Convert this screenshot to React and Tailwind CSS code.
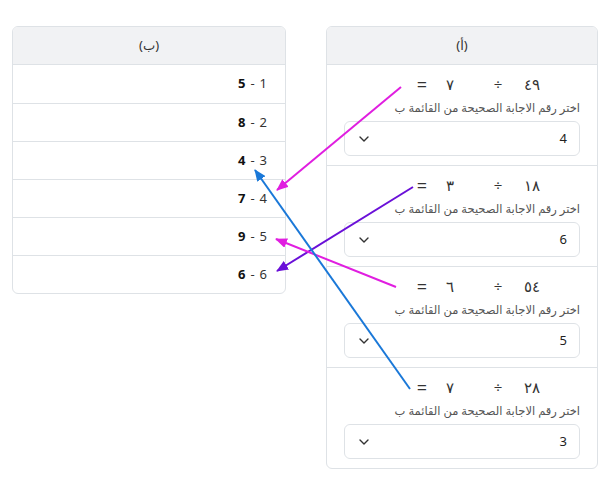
import React from 'react';

const answers = [
  { n: 1, v: 5 },
  { n: 2, v: 8 },
  { n: 3, v: 4 },
  { n: 4, v: 7 },
  { n: 5, v: 9 },
  { n: 6, v: 6 },
];

const questions = [
  { a: '٤٩', b: '٧', pick: 4 },
  { a: '١٨', b: '٣', pick: 6 },
  { a: '٥٤', b: '٦', pick: 5 },
  { a: '٢٨', b: '٧', pick: 3 },
];

// connecting lines drawn over both cards
const links = [
  { x1: 401, y1: 87, x2: 277, y2: 190, color: '#e01ee0', id: 'm1' },
  { x1: 413, y1: 187, x2: 277, y2: 271, color: '#6a10d8', id: 'p1' },
  { x1: 396, y1: 287, x2: 276, y2: 239, color: '#e01ee0', id: 'm2' },
  { x1: 410, y1: 389, x2: 255, y2: 170, color: '#1a78d8', id: 'b1' },
];

function Chevron() {
  return (
    <svg width="10" height="6" viewBox="0 0 10 6" fill="none">
      <path d="M1 1l4 4 4-4" stroke="#333" strokeWidth="1.4" strokeLinecap="round" strokeLinejoin="round" />
    </svg>
  );
}

function QuestionItem({ q, first }) {
  return (
    <div className={`px-[17px] pt-[9px] pb-[9px] ${first ? '' : 'border-t border-[#dee2e6]'}`}>
      <div dir="rtl" className="flex items-center h-[20px] text-[15px] text-[#333] pr-[30px]">
        <span className="w-[36px] text-center">{q.a}</span>
        <span className="w-[32px] text-center">÷</span>
        <span className="w-[24px] ml-[4px] mr-[20px] text-center">{q.b}</span>
        <span className="w-[24px] text-center text-[18px] leading-none">=</span>
      </div>
      <div dir="rtl" className="mt-[4px] h-[20px] leading-[20px] text-[11.5px] text-[#555]">
        اختر رقم الاجابة الصحيحة من القائمة ب
      </div>
      <div className="mt-[3px] h-[35px] flex items-center justify-between border border-[#dee2e6] rounded-[6px] bg-white pl-[14px] pr-[12px]">
        <Chevron />
        <span className="text-[13px] text-[#222]">{q.pick}</span>
      </div>
    </div>
  );
}

export default function App() {
  return (
    <div
      className="relative w-[614px] h-[489px] bg-white"
      style={{ fontFamily: '"Noto Sans", "DejaVu Sans", sans-serif' }}
    >
      <div className="flex items-start pt-[26px] pl-[12px] gap-[40px]">
        {/* List B */}
        <div className="w-[274px] border border-[#dee2e6] rounded-[6px] overflow-hidden">
          <div className="h-[38px] flex items-center justify-center bg-[#f1f2f4] border-b border-[#dee2e6] text-[13px] text-[#333]">
            (ب)
          </div>
          {answers.map((r, i) => (
            <div
              key={r.n}
              className={`h-[38px] flex items-center justify-end pr-[18px] text-[13px] text-[#333] ${i ? 'border-t border-[#dee2e6]' : ''}`}
            >
              <span className="font-bold text-[#111]">{r.v}</span>
              <span className="mx-[5px]">-</span>
              <span>{r.n}</span>
            </div>
          ))}
        </div>

        {/* List A */}
        <div className="w-[272px] border border-[#dee2e6] rounded-[6px] overflow-hidden">
          <div className="h-[38px] flex items-center justify-center bg-[#f1f2f4] border-b border-[#dee2e6] text-[13px] text-[#333]">
            (أ)
          </div>
          {questions.map((q, i) => (
            <QuestionItem key={i} q={q} first={i === 0} />
          ))}
        </div>
      </div>

      <svg className="absolute inset-0 pointer-events-none" width="614" height="489">
        <defs>
          {links.map((l) => (
            <marker
              key={l.id}
              id={`head-${l.id}`}
              markerUnits="userSpaceOnUse"
              markerWidth="12"
              markerHeight="10"
              refX="11"
              refY="5"
              orient="auto"
            >
              <path d="M0 0L12 5L0 10z" fill={l.color} />
            </marker>
          ))}
        </defs>
        {links.map((l) => (
          <line
            key={l.id}
            x1={l.x1}
            y1={l.y1}
            x2={l.x2}
            y2={l.y2}
            stroke={l.color}
            strokeWidth="2"
            markerEnd={`url(#head-${l.id})`}
          />
        ))}
      </svg>
    </div>
  );
}
